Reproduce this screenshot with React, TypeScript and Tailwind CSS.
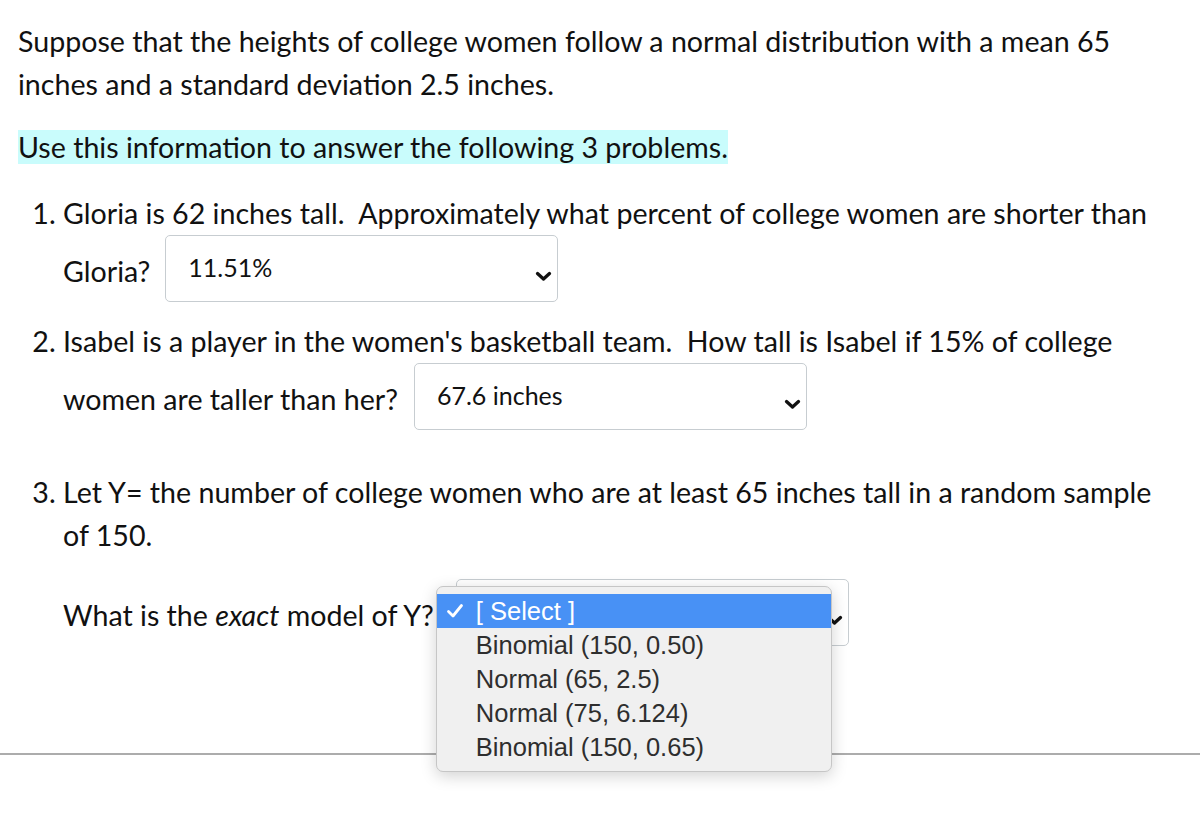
import type { ReactNode } from 'react';

function Chevron() {
  return (
    <svg width="17" height="11" viewBox="0 0 17 11" className="shrink-0">
      <path d="M2.5 2.5 8.5 8l6-5.5" fill="none" stroke="#111" strokeWidth="3.3" strokeLinecap="round" strokeLinejoin="round" />
    </svg>
  );
}

function Check() {
  return (
    <svg width="18" height="16" viewBox="0 0 18 16">
      <path d="M2.5 8.5 7 13 15.5 2.5" fill="none" stroke="#fff" strokeWidth="2.8" strokeLinecap="round" strokeLinejoin="round" />
    </svg>
  );
}

function SelectBox({ value, className = '', children }: { value: string; className?: string; children?: ReactNode }) {
  return (
    <span
      className={`relative inline-flex h-[67px] w-[393px] items-start justify-between rounded-[5px] border border-[#c7cdd1] bg-white pl-[22px] pr-[5px] pt-[16px] align-[5px] ${className}`}
    >
      <span className="text-[25px] leading-[30px]">{value || '\u00a0'}</span>
      <span className="self-center">
        <Chevron />
      </span>
      {children}
    </span>
  );
}

const options = ['Binomial (150, 0.50)', 'Normal (65, 2.5)', 'Normal (75, 6.124)', 'Binomial (150, 0.65)'];

function OptionList() {
  return (
    <div className="absolute -left-[21px] top-[6px] z-10 w-[396px] rounded-[7px] border border-[#c6c6c6] bg-[#f0f0f0] py-[7px] font-[family-name:'Liberation_Sans',Arial,sans-serif] text-[25.5px] text-[#2e2e2e] shadow-[0_4px_16px_rgba(0,0,0,0.18)]">
      <div className="flex h-[34px] items-center bg-[#4891f5] text-white">
        <span className="flex w-[39px] justify-start pl-[9px]">
          <Check />
        </span>
        <span>[ Select ]</span>
      </div>
      {options.map((o) => (
        <div key={o} className="flex h-[34px] items-center pl-[39px]">
          {o}
        </div>
      ))}
    </div>
  );
}

export default function App() {
  return (
    <div className="min-h-screen bg-white font-[family-name:Lato,sans-serif] text-[28.6px] leading-[43px] text-[#111]">
      <div className="pl-[18px] pr-[30px] pt-[20px]">
        <p>
          Suppose that the heights of college women follow a normal distribution with a mean 65 inches and a standard
          deviation 2.5 inches.
        </p>
        <p className="mt-[20px]">
          <span className="bg-[#c9fcfc]">Use this information to answer the following 3 problems.</span>
        </p>

        <ol className="mt-[23px] list-decimal pl-[45px]">
          <li>
            Gloria is 62 inches tall.&nbsp; Approximately what percent of college women are shorter than Gloria?
            <SelectBox value="11.51%" className="ml-[15px]" />
          </li>
          <li className="mt-[18px]">
            Isabel is a player in the women's basketball team.&nbsp; How tall is Isabel if 15% of college women are
            taller than her?
            <SelectBox value="67.6 inches" className="ml-[16px]" />
          </li>
          <li className="mt-[41px]">
            <p>Let Y= the number of college women who are at least 65 inches tall in a random sample of 150.</p>
            <p className="mt-[22px]">
              What is the <em>exact</em> model of Y?
              <SelectBox value="" className="ml-[22px]">
                <OptionList />
              </SelectBox>
            </p>
          </li>
        </ol>
      </div>
      <div className="mt-[107px] h-[2px] bg-[#acacac]" />
    </div>
  );
}
